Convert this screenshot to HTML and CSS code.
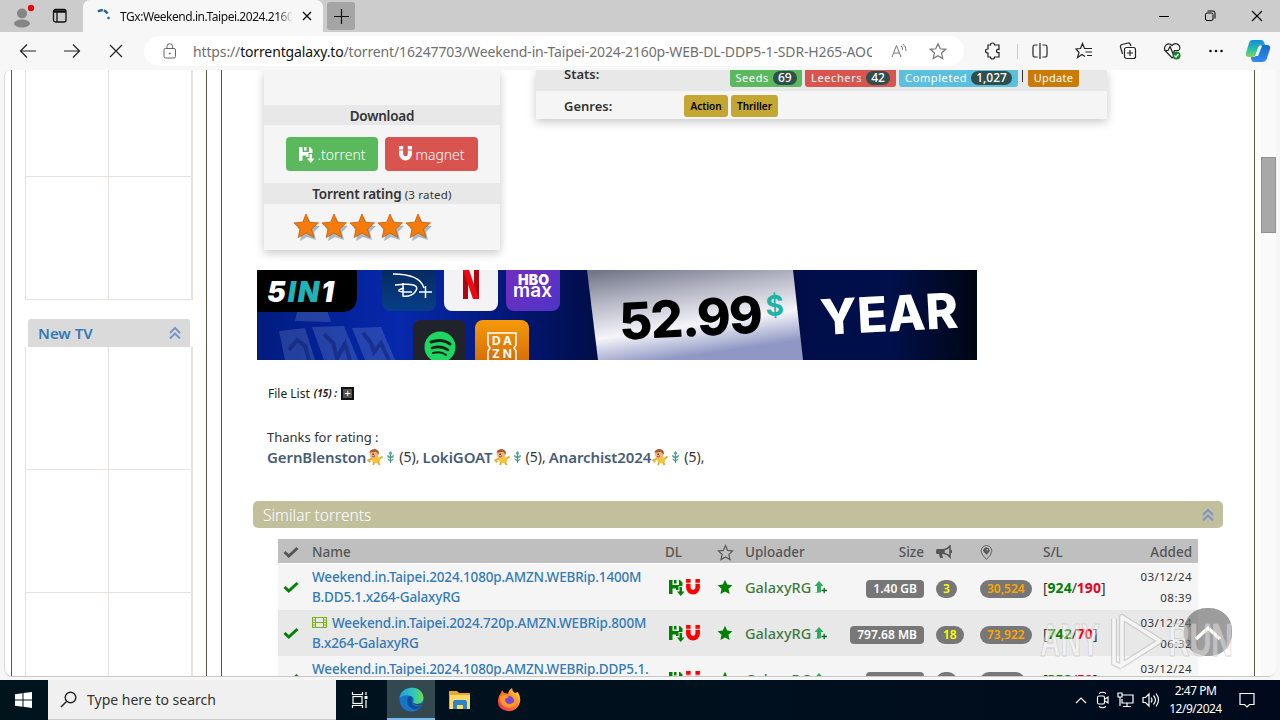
FILE: index.html
```html
<!DOCTYPE html>
<html lang="en">
<head>
	<meta charset="UTF-8">
	<title>TGx:Weekend.in.Taipei.2024.2160p</title>
	<link rel="stylesheet" href="styles.css">
</head>
<body>
	<!-- shared icons -->
	<svg class="defs" width="0" height="0">
		<symbol id="check" viewBox="0 0 16 14"><path d="M1.500 7l4.300 4L14.500 3" fill="none" stroke="currentColor" stroke-width="3"/></symbol>
		<symbol id="star" viewBox="0 0 16 16"><path d="M8 .8l2.200 4.800 5.200.6-3.900 3.500 1.100 5.300L8 12.400l-4.600 2.600 1.100-5.300L.6 6.200l5.200-.6z" fill="currentColor"/></symbol>
		<symbol id="star-o" viewBox="0 0 16 16"><path d="M8 1.500l2 4.500 4.800.5-3.600 3.300 1 4.800L8 12.200l-4.200 2.400 1-4.800L1.200 6.500 6 6z" fill="none" stroke="currentColor" stroke-width="1.100"/></symbol>
		<symbol id="save" viewBox="0 0 17 17"><path d="M1 1h3.500v5H11V1h1l2.500 2.500V7h-4v4H8v-1.500H4.500V15H1z" fill="currentColor"/><path d="M6 1h2.500v3.500H6z" fill="currentColor"/><path d="M11.500 8h2.500v4.500h2.500L12.700 17 9 12.500h2.500z" fill="currentColor"/></symbol>
		<symbol id="magnet" viewBox="0 0 15 16"><path d="M1 4.500V8a6.500 6.500 0 0 0 13 0V4.500H9.800V8a2.300 2.300 0 0 1-4.600 0V4.500zM1 0h4.200v3.500H1zM9.800 0H14v3.500H9.800z" fill="currentColor"/></symbol>
		<symbol id="up2" viewBox="0 0 12 14"><path d="M1 7l5-5 5 5M1 12.500l5-5 5 5" fill="none" stroke="currentColor" stroke-width="2"/></symbol>
		<symbol id="medal" viewBox="0 0 14 14"><path d="M1 12h3V6H1.500L6 1l4.500 5H8v6q-2 1.500-7 0z" fill="#2faa5e"/><path d="M8.500 10.500H14M11.200 7.800v5.500" stroke="#14642f" stroke-width="1.300"/></symbol>
		<symbol id="boy" viewBox="0 0 18 18"><path d="M6 9l5-1 4 2-1 4-5 1-3-2z" fill="#f4c534"/><path d="M6 10l-4 2 2 2M14 10l3-2M8 14l-1 3M12 14l2 3" stroke="#e8a92e" stroke-width="2" fill="none"/><circle cx="8" cy="5.500" r="4.500" fill="#f3b47b"/><path d="M3 4q1-4 6-4 5 1 4 6l-3-3z" fill="#a65b2c"/><circle cx="7" cy="5.500" r=".8"/><path d="M6 8q2 1 3-1" stroke="#c02c22" fill="none"/></symbol>
		<symbol id="leaf" viewBox="0 0 9 13"><path d="M4.500 0l2 2.500-2 2.500-2-2.500zM1 4l3 2v2L1 6.500zM8 4L5 6v2l3-1.500zM1 8l3 1.500v2L2 10zM8 8L5 9.500v2L7 10z" fill="#55a694"/><path d="M4.500 4v9" stroke="#348873"/></symbol>
		<symbol id="rate" viewBox="0 0 28 28"><path d="M15 4l4 8 8 1-6 6 2 8-9-3-7 4 2-9-5-5 8-1z" fill="#a7b9c4"/><path d="M13 1l3.400 8.400 9.100.4-7 6.200 2.500 8.500-8-4.500-7.700 4.500L7 15.800 1 9.900l8.700-.7z" fill="#f57c0b" stroke="#c35b0a" stroke-width=".8"/></symbol>
	</svg>

	<div class="window">
		<div class="titlebar">
			<svg class="profile" width="24" height="28" viewBox="0 0 24 28"><circle cx="10" cy="11.500" r="5" fill="#858585"/><ellipse cx="10" cy="21.500" rx="8" ry="4" fill="#858585"/><circle cx="19" cy="6" r="3.200" fill="#e00b13"/></svg>
			<svg class="tabs-icon" width="16" height="16" viewBox="0 0 16 16" fill="none" stroke="#111" stroke-width="1.300"><rect x="1.500" y="1.500" width="12.500" height="12.500" rx="2"/><path d="M1.500 3.500h12.500" stroke-width="2.500"/><path d="M5 4v10"/></svg>
			<div class="tab">
				<svg class="spinner" width="14" height="14" viewBox="0 0 14 14"><path d="M1 2.500Q7-1 11 5" fill="none" stroke="#28618f" stroke-width="2.400" stroke-dasharray="5 1"/><circle cx="11.500" cy="9" r="1.300" fill="#28618f"/></svg>
				<span class="tab-title">TGx:Weekend.in.Taipei.2024.2160p</span>
				<svg width="10" height="10" viewBox="0 0 10 10"><path d="M1 1l8 8M9 1L1 9" stroke="#111" stroke-width="1.400"/></svg>
			</div>
			<div class="new-tab"><svg width="15" height="15" viewBox="0 0 15 15"><path d="M7.500 0v15M0 7.500h15" stroke="#111" stroke-width="1.200"/></svg></div>
			<div class="window-buttons">
				<svg width="10" height="12" viewBox="0 0 10 12"><path d="M0 6.500h10" stroke="#000"/></svg>
				<svg width="12" height="12" viewBox="0 0 12 12" fill="none" stroke="#000"><rect x="1.500" y="3" width="7.500" height="7.500" rx="1.500"/><path d="M3.500 1h5.500a2 2 0 0 1 2 2v5.500"/></svg>
				<svg width="12" height="12" viewBox="0 0 12 12"><path d="M1 1l10 10M11 1L1 11" stroke="#000" stroke-width="1.100"/></svg>
			</div>
		</div>

		<div class="toolbar">
			<div class="nav">
				<svg width="18" height="16" viewBox="0 0 18 16"><path d="M17 8H1.500M8 1.500L1.500 8 8 14.500"/></svg>
				<svg width="18" height="16" viewBox="0 0 18 16"><path d="M1 8h15.500M10 1.500L16.500 8 10 14.500"/></svg>
				<svg width="18" height="16" viewBox="0 0 18 16"><path d="M3 2l12 12M15 2L3 14"/></svg>
			</div>
			<div class="address">
				<svg width="14" height="16" viewBox="0 0 14 16" fill="none" stroke="#666"><rect x="1" y="5.500" width="11.500" height="9.500" rx="1.500"/><path d="M4 5.500V3.500a2.800 2.800 0 0 1 5.600 0v2"/><circle cx="6.800" cy="10.500" r=".6" fill="#666"/></svg>
				<span class="url">https://<b>torrentgalaxy.to</b>/torrent/16247703/Weekend-in-Taipei-2024-2160p-WEB-DL-DDP5-1-SDR-H265-AOC</span>
				<svg class="read" width="17" height="16" viewBox="0 0 17 16" fill="none" stroke="#777"><path d="M1 14L5.500 2.500 10 14M3 10h5.500M10 3q2 1.500 1.500 4M12 1q3.500 2.500 3 7"/></svg>
				<svg class="fav" width="18" height="18"><use href="#star-o"/></svg>
			</div>
			<div class="tools">
				<svg width="18" height="18" viewBox="0 0 18 18"><path d="M5 3h2.500q0-2 2-2t2 2H16v4.500q-2.500-.5-2.500 1.500t2.500 1.500V15h-4.500q0 2-2 2t-2-2H5v-4q-2.500 0-2.500-2T5 7z"/></svg>
				<i class="divider"></i>
				<svg width="18" height="18" viewBox="0 0 18 18"><path d="M9 1v16M6.500 3H3.500Q2 3 2 5v8q0 2 1.500 2h3M11.500 3h3Q16 3 16 5v8q0 2-1.500 2h-3"/></svg>
				<svg width="18" height="18" viewBox="0 0 18 18"><path d="M10 14.500L7 12.500 2.500 15.500 4 10.500 1 7l4.500-.5L7.500 1.500l2 5h7.500M10.500 10H17M12 13.500h5"/></svg>
				<svg width="18" height="18" viewBox="0 0 18 18"><path d="M3.500 12L1.500 5Q1 3 3 2.500L9 1q2-.5 3 3"/><rect x="5.500" y="5.500" width="11" height="11" rx="2"/><path d="M11 8v6M8 11h6"/></svg>
				<svg width="18" height="18" viewBox="0 0 18 18"><path d="M10 15l-1 1-6-6.500C-1 5 5-1 9 3.500 13-1 19 4 16 8M1 8.500h4l2-4 3 7 1.500-3H16"/><circle cx="13.500" cy="13.500" r="4" fill="#14812b" stroke="none"/><path d="M11.500 13.500l1.500 1.500 2.500-3" stroke="#fff"/></svg>
				<svg width="18" height="18" viewBox="0 0 18 18"><g fill="#111" stroke="none"><circle cx="3.500" cy="9" r="1.300"/><circle cx="9" cy="9" r="1.300"/><circle cx="14.500" cy="9" r="1.300"/></g></svg>
				<svg class="copilot" width="26" height="24" viewBox="0 0 26 24"><defs><linearGradient id="cp" x2="0" y2="1"><stop stop-color="#138ddd"/><stop offset=".6" stop-color="#2ac5a5"/><stop offset="1" stop-color="#8cd442"/></linearGradient><linearGradient id="cq" x2="0" y2="1"><stop stop-color="#126fc8"/><stop offset="1" stop-color="#3589ef"/></linearGradient></defs><path d="M7 1h9q3 0 4 5h-4q-2 0-3 3l-2 6q-1 3-4 3H4q-4 0-3-4L4 4q1-3 3-3z" fill="url(#cp)"/><path d="M20 6h2q4 0 3 4l-3 9q-1 4-5 4H9q-3 0-3-5h3q2 0 3-3l2-6q1-3 4-3z" fill="url(#cq)"/><path d="M14 7h3l-4 10h-3z" fill="#eefafa"/></svg>
			</div>
		</div>

		<div class="viewport">
			<div class="sidebar">
				<div class="covers first"><i></i><i></i><i></i><i></i></div>
				<div class="block-head">New TV <svg width="12" height="14"><use href="#up2"/></svg></div>
				<div class="covers second"><i></i><i></i><i></i><i></i><i></i><i></i></div>
			</div>

			<div class="main">
				<div class="top">
					<div class="card download">
						<div class="poster"></div>
						<div class="caption">Download</div>
						<div class="buttons">
							<span class="btn green"><svg width="17" height="17"><use href="#save"/></svg>.torrent</span>
							<span class="btn red"><svg width="15" height="16"><use href="#magnet"/></svg>magnet</span>
						</div>
						<div class="caption rating">Torrent rating <small>(3 rated)</small></div>
						<div class="stars">
							<svg width="28" height="28"><use href="#rate"/></svg><svg width="28" height="28"><use href="#rate"/></svg><svg width="28" height="28"><use href="#rate"/></svg><svg width="28" height="28"><use href="#rate"/></svg><svg width="28" height="28"><use href="#rate"/></svg>
						</div>
					</div>
					<div class="card info">
						<div class="stats">
							<b>Stats:</b>
							<span class="label seeds">Seeds <em>69</em></span>
							<span class="label leechers">Leechers <em>42</em></span>
							<span class="label completed">Completed <em>1,027</em></span>
							<i></i>
							<span class="label update">Update</span>
						</div>
						<div class="genres"><b>Genres:</b><span class="genre">Action</span><span class="genre thriller">Thriller</span></div>
					</div>
				</div>

				<svg class="banner" width="720" height="90" viewBox="0 0 720 90">
					<defs>
						<linearGradient id="sky"><stop stop-color="#001c80"/><stop offset=".2" stop-color="#0728ad"/><stop offset=".38" stop-color="#02156c"/><stop offset=".5" stop-color="#000b3c"/><stop offset=".75" stop-color="#000d49"/><stop offset=".88" stop-color="#00104a"/><stop offset="1" stop-color="#000614"/></linearGradient>
						<linearGradient id="steel" x1="0" y1="0" x2=".35" y2="1"><stop stop-color="#6b7082"/><stop offset=".35" stop-color="#b5b7c5"/><stop offset=".7" stop-color="#f5f5f9"/><stop offset="1" stop-color="#8f98c4"/></linearGradient>
						<linearGradient id="purple" x2="1" y2="1"><stop stop-color="#7a2cbd"/><stop offset="1" stop-color="#4c35c8"/></linearGradient>
						<linearGradient id="orange" x2="0" y2="1"><stop stop-color="#f59a0a"/><stop offset="1" stop-color="#c95a08"/></linearGradient>
						<linearGradient id="disney" x2="0" y2="1"><stop stop-color="#062457"/><stop offset="1" stop-color="#063f88"/></linearGradient>
					</defs>
					<rect width="720" height="90" fill="url(#sky)"/>
					<g fill="#7d97d0" opacity=".28"><path d="M40 42l30-2 4 12-36-1zM22 61l26-3 10 32H28zM55 57l32-1 14 34H67zM95 58l29-1 14 33h-30z"/></g>
					<g stroke="#02145e" opacity=".4" stroke-width="4" fill="none"><path d="M32 80l8-10 8 6 4 14M67 64l9 9 4 15 8-14 5 16M106 63l8 10 3 9 7-9 8 17"/></g>
					<path d="M0 0h100v26q0 16-16 16H0z" fill="#000"/>
					<text x="10" y="32" class="bn-five" textLength="67">5<tspan fill="#22b2b5">IN</tspan>1</text>
					<rect x="125" y="-12" width="54" height="53" rx="8" fill="url(#disney)"/>
					<g stroke="#fff" fill="none" stroke-width="1.500"><path d="M136 4q27 0 31 14M138 15q28-3 20 7-4 5-12 4V13M147 18q-10 3-1 4h9M162 22h13M168.500 16v12"/></g>
					<rect x="187" y="-12" width="54" height="53" rx="8" fill="#f3f3f5"/>
					<path d="M206 0h5v29h-5z M217 0h5v29h-5z" fill="#b2060e"/><path d="M206 0h6l10 29h-6z" fill="#ea0914"/>
					<rect x="249" y="-12" width="54" height="53" rx="8" fill="url(#purple)"/>
					<text x="261" y="15" class="bn-hbo" textLength="31">HBO</text><text x="256" y="27" class="bn-max" textLength="39">max</text>
					<rect x="156" y="50" width="53" height="60" rx="8" fill="#20242a"/>
					<circle cx="183" cy="77" r="15.500" fill="#1ed760"/><g stroke="#17201b" fill="none" stroke-linecap="round"><path d="M174 72q11-4 19 2" stroke-width="3"/><path d="M175 78q9-3 16 2" stroke-width="2.500"/><path d="M176 83q8-2 13 2" stroke-width="2"/></g>
					<rect x="218" y="50" width="54" height="60" rx="8" fill="url(#orange)"/>
					<path d="M231 90v-9l2-3-2-3V63h28v12l-2 3 2 3v9" fill="none" stroke="#fff" stroke-width="1.500"/>
					<text class="bn-dazn" x="235" y="75" textLength="20">DA</text><text class="bn-dazn" x="235" y="88" textLength="20">ZN</text>
					<path d="M330 0h206l10 90H341z" fill="url(#steel)"/>
					<text class="bn-price" x="363" y="70" textLength="144" transform="rotate(-3 363 70)">52.99</text>
					<text class="bn-dollar" x="509" y="46" transform="rotate(-3 509 46)">$</text>
					<text class="bn-year" x="564" y="65" textLength="138" transform="rotate(-3 564 65)">YEAR</text>
				</svg>

				<div class="file-list">File List <i>(15) :</i> <span class="plus">+</span></div>
				<div class="thanks">
					<div>Thanks for rating :</div>
					<div class="users">
						<b>GernBlenston</b><svg width="18" height="17"><use href="#boy"/></svg><svg class="leaf" width="9" height="12"><use href="#leaf"/></svg><span>(5),</span>
						<b class="u2">LokiGOAT</b><svg width="18" height="17"><use href="#boy"/></svg><svg class="leaf" width="9" height="12"><use href="#leaf"/></svg><span>(5),</span>
						<b>Anarchist2024</b><svg width="18" height="17"><use href="#boy"/></svg><svg class="leaf" width="9" height="12"><use href="#leaf"/></svg><span>(5),</span>
					</div>
				</div>

				<div class="similar-head">Similar torrents <svg width="12" height="14"><use href="#up2"/></svg></div>
				<div class="torrents">
					<div class="row head">
						<div><svg width="16" height="14"><use href="#check"/></svg></div>
						<div>Name</div><div>DL</div>
						<div><svg width="17" height="17"><use href="#star-o"/></svg></div>
						<div>Uploader</div><div class="size">Size</div>
						<div><svg width="16" height="14" viewBox="0 0 16 14" fill="#555"><path d="M1 4h7v5H6l1 4H4L3 9H1Q0 9 0 6.500T1 4z"/><path d="M8 4.500q4-.5 6-3.500v11q-2-3-6-3.500z" fill="none" stroke="#555" stroke-width="1.500"/><path d="M15 5v3" stroke="#555" stroke-width="2"/></svg></div>
						<div><svg width="13" height="15" viewBox="0 0 12 14"><path d="M6 13.500Q1 9 1 5.500a5 5 0 0 1 10 0Q11 9 6 13.500z" fill="none" stroke="#555" stroke-width=".8"/><path d="M6 9Q3 7 3 5t3-3q3 1 3 3T6 9z" fill="#555"/><circle cx="6.600" cy="4.500" r=".8" fill="#bbb"/></svg></div>
						<div>S/L</div><div class="added">Added</div>
					</div>
					<div class="row">
						<div class="ok"><svg width="16" height="14"><use href="#check"/></svg></div>
						<div class="name"><a>Weekend.in.Taipei.2024.1080p.AMZN.WEBRip.1400M</a><br><a>B.DD5.1.x264-GalaxyRG</a></div>
						<div class="dl"><svg width="17" height="17"><use href="#save"/></svg><svg class="mag" width="16" height="17"><use href="#magnet"/></svg></div>
						<div class="ok"><svg width="16" height="16"><use href="#star"/></svg></div>
						<div class="uploader">GalaxyRG<svg width="14" height="14"><use href="#medal"/></svg></div>
						<div class="size"><span class="badge">1.40 GB</span></div>
						<div><span class="pill yellow">3</span></div>
						<div><span class="pill orange">30,524</span></div>
						<div class="sl">[<b class="s">924</b>/<b class="l">190</b>]</div>
						<div class="added">03/12/24<br>08:39</div>
					</div>
					<div class="row even">
						<div class="ok"><svg width="16" height="14"><use href="#check"/></svg></div>
						<div class="name"><svg class="film" width="15" height="11" viewBox="0 0 15 11" fill="none" stroke="#79b510"><rect x=".5" y=".5" width="14" height="10"/><path d="M3.500 0v11M11.500 0v11M3.500 5.500h8M0 3h3M0 5.500h3M0 8h3M12 3h3M12 5.500h3M12 8h3"/></svg><a>Weekend.in.Taipei.2024.720p.AMZN.WEBRip.800M</a><br><a>B.x264-GalaxyRG</a></div>
						<div class="dl"><svg width="17" height="17"><use href="#save"/></svg><svg class="mag" width="16" height="17"><use href="#magnet"/></svg></div>
						<div class="ok"><svg width="16" height="16"><use href="#star"/></svg></div>
						<div class="uploader">GalaxyRG<svg width="14" height="14"><use href="#medal"/></svg></div>
						<div class="size"><span class="badge">797.68 MB</span></div>
						<div><span class="pill yellow">18</span></div>
						<div><span class="pill orange">73,922</span></div>
						<div class="sl">[<b class="s">742</b>/<b class="l">70</b>]</div>
						<div class="added">03/12/24<br>06:32</div>
					</div>
					<div class="row">
						<div class="ok"><svg width="16" height="14"><use href="#check"/></svg></div>
						<div class="name"><a>Weekend.in.Taipei.2024.1080p.AMZN.WEBRip.DDP5.1.</a><br><a>x265-GalaxyRG</a></div>
						<div class="dl"><svg width="17" height="17"><use href="#save"/></svg><svg class="mag" width="16" height="17"><use href="#magnet"/></svg></div>
						<div class="ok"><svg width="16" height="16"><use href="#star"/></svg></div>
						<div class="uploader">GalaxyRG<svg width="14" height="14"><use href="#medal"/></svg></div>
						<div class="size"><span class="badge">1.80 GB</span></div>
						<div><span class="pill yellow">2</span></div>
						<div><span class="pill orange">9,524</span></div>
						<div class="sl">[<b class="s">358</b>/<b class="l">50</b>]</div>
						<div class="added">03/12/24<br>06:18</div>
					</div>
				</div>
			</div>
			<div class="scrollbar"><div class="thumb"></div></div>

			<div class="to-top"><svg width="32" height="24" viewBox="0 0 32 24"><path d="M4 19L16 8l12 11" fill="none" stroke="#fff" stroke-width="3.500"/></svg></div>
			<svg class="watermark" width="204" height="68" viewBox="0 0 204 68">
				<g class="mark-text">
					<text x="4" y="51" textLength="60" lengthAdjust="spacingAndGlyphs">ANY</text>
					<text x="132" y="51" textLength="65" lengthAdjust="spacingAndGlyphs">RUN</text>
				</g>
				<g fill="none" stroke="#bbb" stroke-width="6" stroke-linejoin="round" opacity=".6"><path d="M78 14v44l8 4M86 12v48l38-24z"/></g>
				<g fill="none" stroke="#fff" stroke-width="3.500" stroke-linejoin="round" opacity=".8"><path d="M78 14v44l8 4M86 12v48l38-24z"/></g>
			</svg>
		</div>

		<div class="taskbar">
			<div class="start"><svg width="17" height="16" viewBox="0 0 17 16" fill="#fff"><path d="M0 2.300L7.500 1.200v6.300H0zM8.500 1L17 0v7.500H8.500zM0 8.500h7.500v6.300L0 13.700zM8.500 8.500H17V16l-8.500-1.200z"/></svg></div>
			<div class="search"><svg width="17" height="17" viewBox="0 0 17 17" fill="none" stroke="#222" stroke-width="1.400"><circle cx="10.500" cy="6.500" r="5.300"/><path d="M6.500 10.500L1 16"/></svg><span>Type here to search</span></div>
			<div class="task"><svg width="18" height="16" viewBox="0 0 18 16" fill="none" stroke="#fff" stroke-width="1.200"><rect x="2" y="4.500" width="9" height="7"/><path d="M1.500 0v2.500h10V0M1.500 16v-2.500h10V16M15 0v3M15 8v8"/><path d="M13.500 5.500h3" stroke-width="3"/></svg></div>
			<div class="task active"><svg width="25" height="25" viewBox="0 0 25 25"><defs><linearGradient id="e1"><stop stop-color="#249de1"/><stop offset=".6" stop-color="#32c8b3"/><stop offset="1" stop-color="#6cda54"/></linearGradient></defs><circle cx="12.500" cy="12.500" r="12" fill="#1475ca"/><path d="M.5 11C2-2 24-3 24.500 11q0 5-6 6-5 0-4-3 1-4-3-5Q5 7 .5 11z" fill="url(#e1)"/><path d="M9 10q-3 9 5 12 5 1 8-3-9 2-9-5 1-3-1-5z" fill="#124b96"/><path d="M14 12q-2 7 10 4l-1 2q-9 1-9-3z" fill="#34474e"/></svg></div>
			<div class="task"><svg width="22" height="20" viewBox="0 0 22 20"><path d="M0 1h8l2 2h11v16H0z" fill="#e8a82c"/><path d="M1 5h20v14H1z" fill="#ffda69"/><path d="M4 19v-7q0-2 2-2h10q2 0 2 2v7h-4v-4H8v4z" fill="#2b85c7"/></svg></div>
			<div class="task"><svg width="24" height="24" viewBox="0 0 24 24"><defs><linearGradient id="ff" x1="1" y1="0" x2="0" y2="1"><stop stop-color="#ffe43c"/><stop offset=".5" stop-color="#ff7a22"/><stop offset="1" stop-color="#f01e62"/></linearGradient></defs><path d="M4 5l1-3 2 3q3 0 4 1 0-3 4-6 0 3 3 5l3-1q4 7 1 13-4 7-12 6Q0 21 1 12q0-4 3-7z" fill="url(#ff)"/><circle cx="12" cy="13" r="5" fill="#7547d8"/><path d="M3 9q5-4 9 0l-4 2q0 5 5 5 5-1 5-5 3 8-5 9Q3 20 3 9z" fill="#ff9826"/></svg></div>
			<div class="tray">
				<svg width="12" height="8" viewBox="0 0 12 8"><path d="M1 7l5-5 5 5"/></svg>
				<svg width="14" height="18" viewBox="0 0 14 18"><rect x="2.500" y="5" width="7" height="8" rx="1.500"/><path d="M10 8l3-2v6l-3-2M4 2.500Q7.500 0 11 2.500M4 15.500q3.500 2.500 7 0"/></svg>
				<svg width="17" height="16" viewBox="0 0 17 16"><path d="M5 3h11v8H5V7M10 11v3M6 14.500h8M1 1h4v4H1zM3 5v9"/></svg>
				<svg width="18" height="16" viewBox="0 0 18 16"><path d="M1 5.500h2.500L7 2v12l-3.500-3.500H1zM9 5.500q2 2.500 0 5M11.500 3.500q4 4.500 0 9M14 1.500q5 6.500 0 13"/></svg>
			</div>
			<div class="clock">2:47 PM<br>12/9/2024</div>
			<svg class="notice" width="16" height="17" viewBox="0 0 16 17"><path d="M1 1.500h14v11h-4.500L8 15l-2.500-2.500H1z" fill="none" stroke="#fff" stroke-width="1.200"/></svg>
		</div>
	</div>
</body>
</html>
```
FILE: styles.css
```css
* {
	box-sizing: border-box;
}
body {
	margin: 0;
	font-family: "Noto Sans", "Open Sans", sans-serif;
	font-size: 13px;
	color: #333;
}
svg {
	flex: none;
	display: block;
}
.defs {
	display: none;
}
.window {
	width: 1280px;
	height: 720px;
	overflow: hidden;
	display: flex;
	flex-direction: column;
	background: #f6f6f6;
}
.titlebar {
	height: 32px;
	flex: none;
	display: flex;
	align-items: center;
	background: #ccc;
	padding-left: 12px;
}
.tabs-icon {
	margin-left: 16px;
}
.tab {
	width: 240px;
	height: 32px;
	margin-left: 15px;
	padding: 0 11px 0 14px;
	display: flex;
	align-items: center;
	background: #f7f7f7;
	border-radius: 7px 7px 0 0;
	color: #111;
}
.tab-title {
	width: 174px;
	margin: 0 9px 0 9px;
	overflow: hidden;
	white-space: nowrap;
	font-size: 12px;
	letter-spacing: -.45px;
	-webkit-mask-image: linear-gradient(to right, #000 91%, transparent);
}
.new-tab {
	width: 28px;
	height: 28px;
	margin-left: 4px;
	display: flex;
	align-items: center;
	justify-content: center;
	background: #a5a5a5;
	border-radius: 3px;
}
.window-buttons {
	margin-left: auto;
	padding-right: 17px;
	display: flex;
	gap: 35px;
}
.toolbar {
	height: 38px;
	flex: none;
	display: flex;
	align-items: center;
	background: #f7f7f7;
}
.nav {
	width: 144px;
	display: flex;
	gap: 26px;
	padding-left: 19px;
}
.nav svg, .tools svg {
	fill: none;
	stroke: #222;
	stroke-width: 1.2;
}
.address {
	width: 820px;
	height: 30px;
	display: flex;
	align-items: center;
	padding-left: 19px;
	border-radius: 15px;
	background: #fff;
}
.url {
	width: 679px;
	margin-left: 16px;
	overflow: hidden;
	white-space: nowrap;
	font-size: 14px;
	letter-spacing: -.14px;
	color: #707070;
}
.url b {
	font-weight: normal;
	color: #111;
}
.read {
	margin-left: 19px;
}
.fav {
	margin-left: 21px;
	color: #777;
}
.tools {
	display: flex;
	align-items: center;
	margin-left: 19px;
}
.tools svg {
	margin-right: 26px;
}
.tools .divider {
	width: 1px;
	height: 15px;
	margin: 0 13px 0 -10px;
	background: #ccc;
}
.tools .copilot {
	margin: 0 0 0 -6px;
	stroke: none;
}
.viewport {
	position: relative;
	height: 607px;
	flex: none;
	margin: 0 4px 3px;
	display: flex;
	align-items: flex-start;
	background: #fff;
	border-left: 1px solid #ddd;
	border-bottom: 1px solid #c8c8c8;
	border-radius: 6px 0 8px 8px;
	overflow: hidden;
}
.sidebar {
	width: 196px;
	height: 610px;
	margin-left: 6px;
	border: solid #56593c;
	border-width: 0 1px;
	padding: 0 13px;
}
.covers {
	width: 168px;
	display: grid;
	grid-template-columns: 83px 84px;
	border-left: 1px solid #e6dede;
}
.covers i {
	border: solid #e9e0e0;
	border-width: 0 1px 1px 0;
}
.covers i:nth-child(even) {
	border-right: 2px solid #e9e0e0;
}
.first {
	grid-template-rows: 107px 123px;
}
.second {
	grid-template-rows: 123px 123px 123px;
}
.block-head {
	width: 162px;
	height: 28px;
	margin: 19px 0 0 3px;
	padding: 0 9px 0 10px;
	display: flex;
	align-items: center;
	justify-content: space-between;
	background: #dadada;
	border-radius: 3px 3px 0 0;
	color: #337ab7;
	font-size: 15px;
	font-weight: 600;
}
.block-head svg, .similar-head svg {
	color: #7896c5;
}
.main {
	width: 1034px;
	height: 610px;
	margin-left: 14px;
	padding-left: 31px;
	border: solid #56593c;
	border-width: 0 1px;
}
.top {
	height: 200px;
	padding-left: 11px;
	display: flex;
	align-items: flex-start;
	gap: 36px;
}
.card {
	background: #f5f5f5;
	box-shadow: 0 3px 9px rgba(0, 0, 0, .22);
}
.download {
	width: 236px;
	height: 180px;
}
.poster {
	height: 35px;
}
.caption {
	height: 20px;
	line-height: 22px;
	background: #e8e8e8;
	text-align: center;
	font-size: 13.5px;
	letter-spacing: -.2px;
	font-weight: 600;
}
.caption small {
	font-size: 11.5px;
	letter-spacing: .2px;
	font-weight: normal;
}
.rating {
	height: 21px;
}
.buttons {
	height: 58px;
	display: flex;
	gap: 7px;
	padding: 12px 0 0 22px;
}
.btn {
	height: 34px;
	display: flex;
	align-items: center;
	justify-content: center;
	gap: 2px;
	border-radius: 4px;
	color: #fff;
	font-size: 14px;
	font-weight: 300;
}
.green {
	width: 92px;
	background: #5cb85c;
}
.red {
	width: 93px;
	background: #d9534f;
}
.stars {
	display: flex;
	padding: 9px 0 0 29px;
}
.info {
	width: 571px;
	height: 49px;
}
.stats {
	height: 21px;
	display: flex;
	align-items: flex-start;
	background: #e8e8e8;
	overflow: hidden;
	color: #333;
}
.stats b, .genres b {
	font-size: 13px;
	font-weight: 600;
	padding-left: 28px;
}
.stats b {
	width: 194px;
	margin-top: -5px;
}
.stats i {
	width: 1px;
	height: 12px;
	margin: 0 5px 0 1px;
	background: #333;
}
.label {
	height: 17px;
	line-height: 15px;
	margin-right: 3px;
	display: flex;
	justify-content: center;
	gap: 4px;
	border-radius: 0 0 3px 3px;
	color: #fff;
	font-size: 11px;
	letter-spacing: .6px;
}
.label em {
	height: 14px;
	line-height: 14px;
	margin-top: 1px;
	padding: 0 5px;
	border-radius: 8px;
	background: #2f4f4f;
	font-style: normal;
	font-size: 12px;
	font-weight: 500;
	letter-spacing: 0;
}
.seeds {
	width: 72px;
	background: #5cb85c;
}
.leechers {
	width: 91px;
	background: #d9534f;
}
.completed {
	width: 119px;
	background: #5bc0de;
}
.update {
	width: 51px;
	letter-spacing: .3px;
	background: #c97b05;
}
.genres {
	height: 28px;
	display: flex;
	padding-top: 4px;
	gap: 3px;
}
.genres b {
	width: 145px;
	line-height: 22px;
}
.genre {
	width: 44px;
	height: 22px;
	line-height: 22px;
	text-align: center;
	border-radius: 3px;
	background: #c4a633;
	color: #000;
	font-size: 10px;
	font-weight: 600;
}
.thriller {
	width: 47px;
}
.banner {
	margin-left: 4px;
	font-family: "Inter", "Liberation Sans", sans-serif;
	font-weight: 700;
	fill: #fff;
}
.bn-five {
	font-size: 28px;
	font-style: italic;
	font-weight: 900;
}
.bn-hbo {
	font-size: 14px;
	font-weight: 900;
}
.bn-max {
	font-size: 19px;
	font-weight: 600;
}
.bn-dazn {
	font-size: 12px;
}
.bn-price {
	font-size: 51px;
	font-weight: 800;
	fill: #000;
}
.bn-dollar {
	font-size: 28px;
	fill: #22b2a5;
}
.bn-year {
	font-size: 49px;
	font-weight: 800;
}
.file-list {
	height: 18px;
	margin: 24px 0 0 15px;
	display: flex;
	align-items: center;
	gap: 4px;
	font-size: 12px;
	color: #222;
}
.file-list i {
	font-weight: bold;
	font-size: 10px;
}
.plus {
	width: 13px;
	height: 13px;
	line-height: 10px;
	text-align: center;
	border: 2px solid #111;
	background: #555;
	line-height: 8px;
	color: #fff;
	font-size: 11px;
}
.thanks {
	height: 99px;
	padding: 25px 0 0 14px;
	line-height: 20px;
}
.users {
	display: flex;
	align-items: center;
	font-size: 14px;
}
.users b {
	color: #475c75;
	font-size: 15px;
	letter-spacing: -.1px;
	font-weight: 600;
}
.users .u2 {
	letter-spacing: -.05px;
}
.users span {
	margin: 0 3px 0 4px;
}
.leaf {
	margin-left: 2px;
}
.similar-head {
	width: 970px;
	height: 27px;
	padding: 0 9px 0 10px;
	display: flex;
	align-items: center;
	justify-content: space-between;
	border-radius: 5px;
	background: #c2bf9d;
	color: #fff;
	font-size: 15.5px;
	font-weight: 300;
}
.torrents {
	width: 920px;
	margin: 11px 0 0 25px;
}
.row {
	height: 46px;
	display: grid;
	grid-template-columns: 27px 354px 51px 29px 105px 86px 44px 63px 76px 85px;
	align-items: center;
	background: #f5f5f5;
}
.row > div {
	padding-left: 6px;
}
.row > div:first-child {
	padding-left: 5px;
}
.row > div:nth-child(2), .row > div:nth-child(4) {
	padding-left: 7px;
}
.head {
	height: 24px;
	margin-bottom: 1px;
	padding-top: 2px;
	background: #bfbfbf;
	color: #555;
	font-size: 13.5px;
	font-weight: 500;
}
.even {
	background: #e8e8e8;
}
.name {
	line-height: 20px;
	color: #337ab7;
	font-size: 13.5px;
	letter-spacing: -.15px;
	font-weight: 500;
	white-space: nowrap;
}
.row .size, .row .added {
	text-align: right;
	padding-right: 6px;
}
.ok {
	color: #008000;
}
.film {
	display: inline-block;
	margin-right: 5px;
}
.row .dl {
	display: flex;
	padding-left: 9px;
	color: #008000;
}
.dl .mag {
	color: #f00;
}
.uploader {
	display: flex;
	align-items: center;
	gap: 2px;
	color: #3f7b3f;
	font-size: 14.5px;
	font-weight: 500;
}
.badge, .pill {
	display: inline-block;
	height: 18px;
	line-height: 18px;
	margin-top: 3px;
	padding: 0 7px;
	border-radius: 4px;
	background: #777;
	color: #fff;
	font-size: 12px;
	font-weight: 600;
}
.pill {
	border-radius: 9px;
}
.yellow {
	color: #ff0;
}
.orange {
	color: #ffa500;
}
.sl {
	white-space: nowrap;
	font-size: 14px;
}
.s {
	color: #008000;
}
.l {
	color: #e8001c;
}
.added {
	line-height: 21px;
	font-size: 11.5px;
	letter-spacing: .45px;
}
.head .added {
	font-size: 13.5px;
	letter-spacing: 0;
}
.scrollbar {
	width: 15px;
	height: 607px;
	margin-left: auto;
	padding-top: 87px;
	background: #fafafa;
}
.thumb {
	height: 76px;
	background: #a8a8a8;
	border: 1px solid #909090;
}
/* floating layers over the page */
.to-top {
	position: absolute;
	left: 1179px;
	top: 538px;
	width: 48px;
	height: 48px;
	border-radius: 22px;
	display: flex;
	align-items: center;
	justify-content: center;
	background: rgba(110, 110, 110, .68);
}
.watermark {
	position: absolute;
	left: 1031px;
	top: 535px;
}
.mark-text {
	font-family: "Liberation Sans", sans-serif;
	font-size: 47px;
	font-weight: bold;
	fill: #fff;
	fill-opacity: .4;
	stroke: #c0c0c0;
	stroke-opacity: .65;
}
.taskbar {
	height: 40px;
	flex: none;
	display: flex;
	align-items: center;
	background: linear-gradient(to right, #00141c, #00101e 60%, #000a1c);
	color: #fff;
}
.start {
	width: 48px;
	padding-left: 15px;
}
.search {
	width: 288px;
	height: 40px;
	display: flex;
	align-items: center;
	gap: 10px;
	padding-left: 12px;
	background: #f0f0f0;
	border-bottom: 1px solid #ccc;
	color: #333;
	font-size: 14px;
}
.task {
	width: 48px;
	height: 40px;
	margin-right: 1px;
	display: flex;
	align-items: center;
	justify-content: center;
}
.search + .task {
	margin-right: 3px;
}
.active {
	background: #34484f;
	border-bottom: 2px solid #76b9ed;
}
.tray {
	margin-left: auto;
	display: flex;
	align-items: center;
	gap: 8px;
}
.tray svg {
	fill: none;
	stroke: #fff;
	stroke-width: 1.2;
}
.clock {
	width: 71px;
	text-align: center;
	line-height: 18px;
	font-size: 12px;
	letter-spacing: -.5px;
}
.notice {
	margin: 0 25px 0 8px;
}
```
